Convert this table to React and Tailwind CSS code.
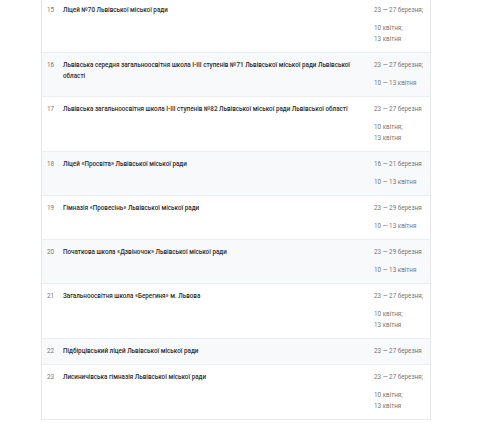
const rows = [
  { n: 15, name: "Ліцей №70 Львівської міської ради", dates: ["23 — 27 березня;", ["10 квітня;", "13 квітня"]] },
  {
    n: 16,
    name: "Львівська середня загальноосвітня школа І-ІІІ ступенів №71 Львівської міської ради Львівської області",
    dates: ["23 — 27 березня;", ["10 — 13 квітня"]],
  },
  {
    n: 17,
    name: "Львівська загальноосвітня школа І-ІІІ ступенів №82 Львівської міської ради Львівської області",
    dates: ["23 — 27 березня", ["10 квітня;", "13 квітня"]],
  },
  { n: 18, name: "Ліцей «Просвіта» Львівської міської ради", dates: ["16 — 21 березня", ["10 — 13 квітня"]] },
  { n: 19, name: "Гімназія «Провесінь» Львівської міської ради", dates: ["23 — 29 березня", ["10 — 13 квітня"]] },
  { n: 20, name: "Початкова школа «Дзвіночок» Львівської міської ради", dates: ["23 — 29 березня", ["10 — 13 квітня"]] },
  { n: 21, name: "Загальноосвітня школа «Берегиня» м. Львова", dates: ["23 — 27 березня;", ["10 квітня;", "13 квітня"]] },
  { n: 22, name: "Підбірцівський ліцей Львівської міської ради", dates: ["23 — 27 березня"] },
  { n: 23, name: "Лисиничівська гімназія Львівської міської ради", dates: ["23 — 27 березня;", ["10 квітня;", "13 квітня"]] },
]

export default function App() {
  return (
    <div className="h-[432px] w-[480px] overflow-hidden bg-white" style={{ fontFamily: 'Roboto, "Noto Sans", sans-serif' }}>
      <div className="ml-[41px] -mt-[3px] w-[390px] border-x border-b border-[#e6e9ec]">
        {rows.map((row, i) => (
          <div
            key={row.n}
            className={`flex border-t border-[#eceff1] py-[7px] text-[6.3px] leading-[11px] ${i % 2 ? "bg-[#f8f9fa]" : "bg-white"}`}
          >
            <div className="w-[16px] shrink-0 pl-[5px] text-[#777]">{row.n}</div>
            <div className="w-[311px] shrink-0 px-[5px] font-medium text-[#2b2b2b]">{row.name}</div>
            <div className="flex-1 whitespace-nowrap px-[5px] text-[#777]">
              <p>{row.dates[0]}</p>
              {row.dates[1] && (
                <p className="mt-[7px]">
                  {row.dates[1].map((d) => (
                    <span key={d} className="block">
                      {d}
                    </span>
                  ))}
                </p>
              )}
            </div>
          </div>
        ))}
      </div>
    </div>
  )
}
